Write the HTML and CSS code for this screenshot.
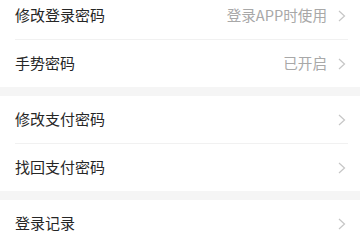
FILE: index.html
```html
<!DOCTYPE html>
<html lang="zh-CN">
<head>
<meta charset="utf-8">
<link rel="stylesheet" href="styles.css">
</head>
<body>
<div class="page">
  <div class="group">
    <div class="row"><span class="title">修改登录密码</span><span class="right"><span class="value">登录APP时使用</span><svg class="chev" width="8" height="12" viewBox="0 0 8 12"><polyline points="1,1 6.5,6 1,11" fill="none" stroke="#c6c6c6" stroke-width="1.2"/></svg></span></div>
    <div class="row"><span class="title">手势密码</span><span class="right"><span class="value">已开启</span><svg class="chev" width="8" height="12" viewBox="0 0 8 12"><polyline points="1,1 6.5,6 1,11" fill="none" stroke="#c6c6c6" stroke-width="1.2"/></svg></span></div>
  </div>
  <div class="group">
    <div class="row"><span class="title">修改支付密码</span><span class="right"><svg class="chev" width="8" height="12" viewBox="0 0 8 12"><polyline points="1,1 6.5,6 1,11" fill="none" stroke="#c6c6c6" stroke-width="1.2"/></svg></span></div>
    <div class="row"><span class="title">找回支付密码</span><span class="right"><svg class="chev" width="8" height="12" viewBox="0 0 8 12"><polyline points="1,1 6.5,6 1,11" fill="none" stroke="#c6c6c6" stroke-width="1.2"/></svg></span></div>
  </div>
  <div class="group">
    <div class="row"><span class="title">登录记录</span><span class="right"><svg class="chev" width="8" height="12" viewBox="0 0 8 12"><polyline points="1,1 6.5,6 1,11" fill="none" stroke="#c6c6c6" stroke-width="1.2"/></svg></span></div>
  </div>
</div>
</body>
</html>
```
FILE: styles.css
```css
html, body {
  margin: 0;
  padding: 0;
  background: #f5f5f5;
  font-family: "Noto Sans CJK SC", "Noto Sans", sans-serif;
  overflow: hidden;
}
.page {
  margin-top: -8px;
  display: flex;
  flex-direction: column;
  gap: 9px;
}
.group {
  background: #ffffff;
  display: flex;
  flex-direction: column;
}
.row {
  box-sizing: border-box;
  height: 48px;
  margin-left: 15px;
  margin-right: 12px;
  border-bottom: 1px solid #f1f1f1;
  display: flex;
  align-items: center;
  justify-content: space-between;
}
.row:last-child {
  height: 47px;
  border-bottom: none;
}
.title {
  font-size: 15px;
  line-height: 20px;
  padding-bottom: 2px;
  color: #262626;
}
.right {
  display: flex;
  align-items: center;
  padding-right: 2px;
}
.value {
  font-size: 14.6px;
  line-height: 20px;
  padding-bottom: 2px;
  color: #a8a8a8;
  margin-right: 11px;
}
.chev {
  display: block;
}
```
